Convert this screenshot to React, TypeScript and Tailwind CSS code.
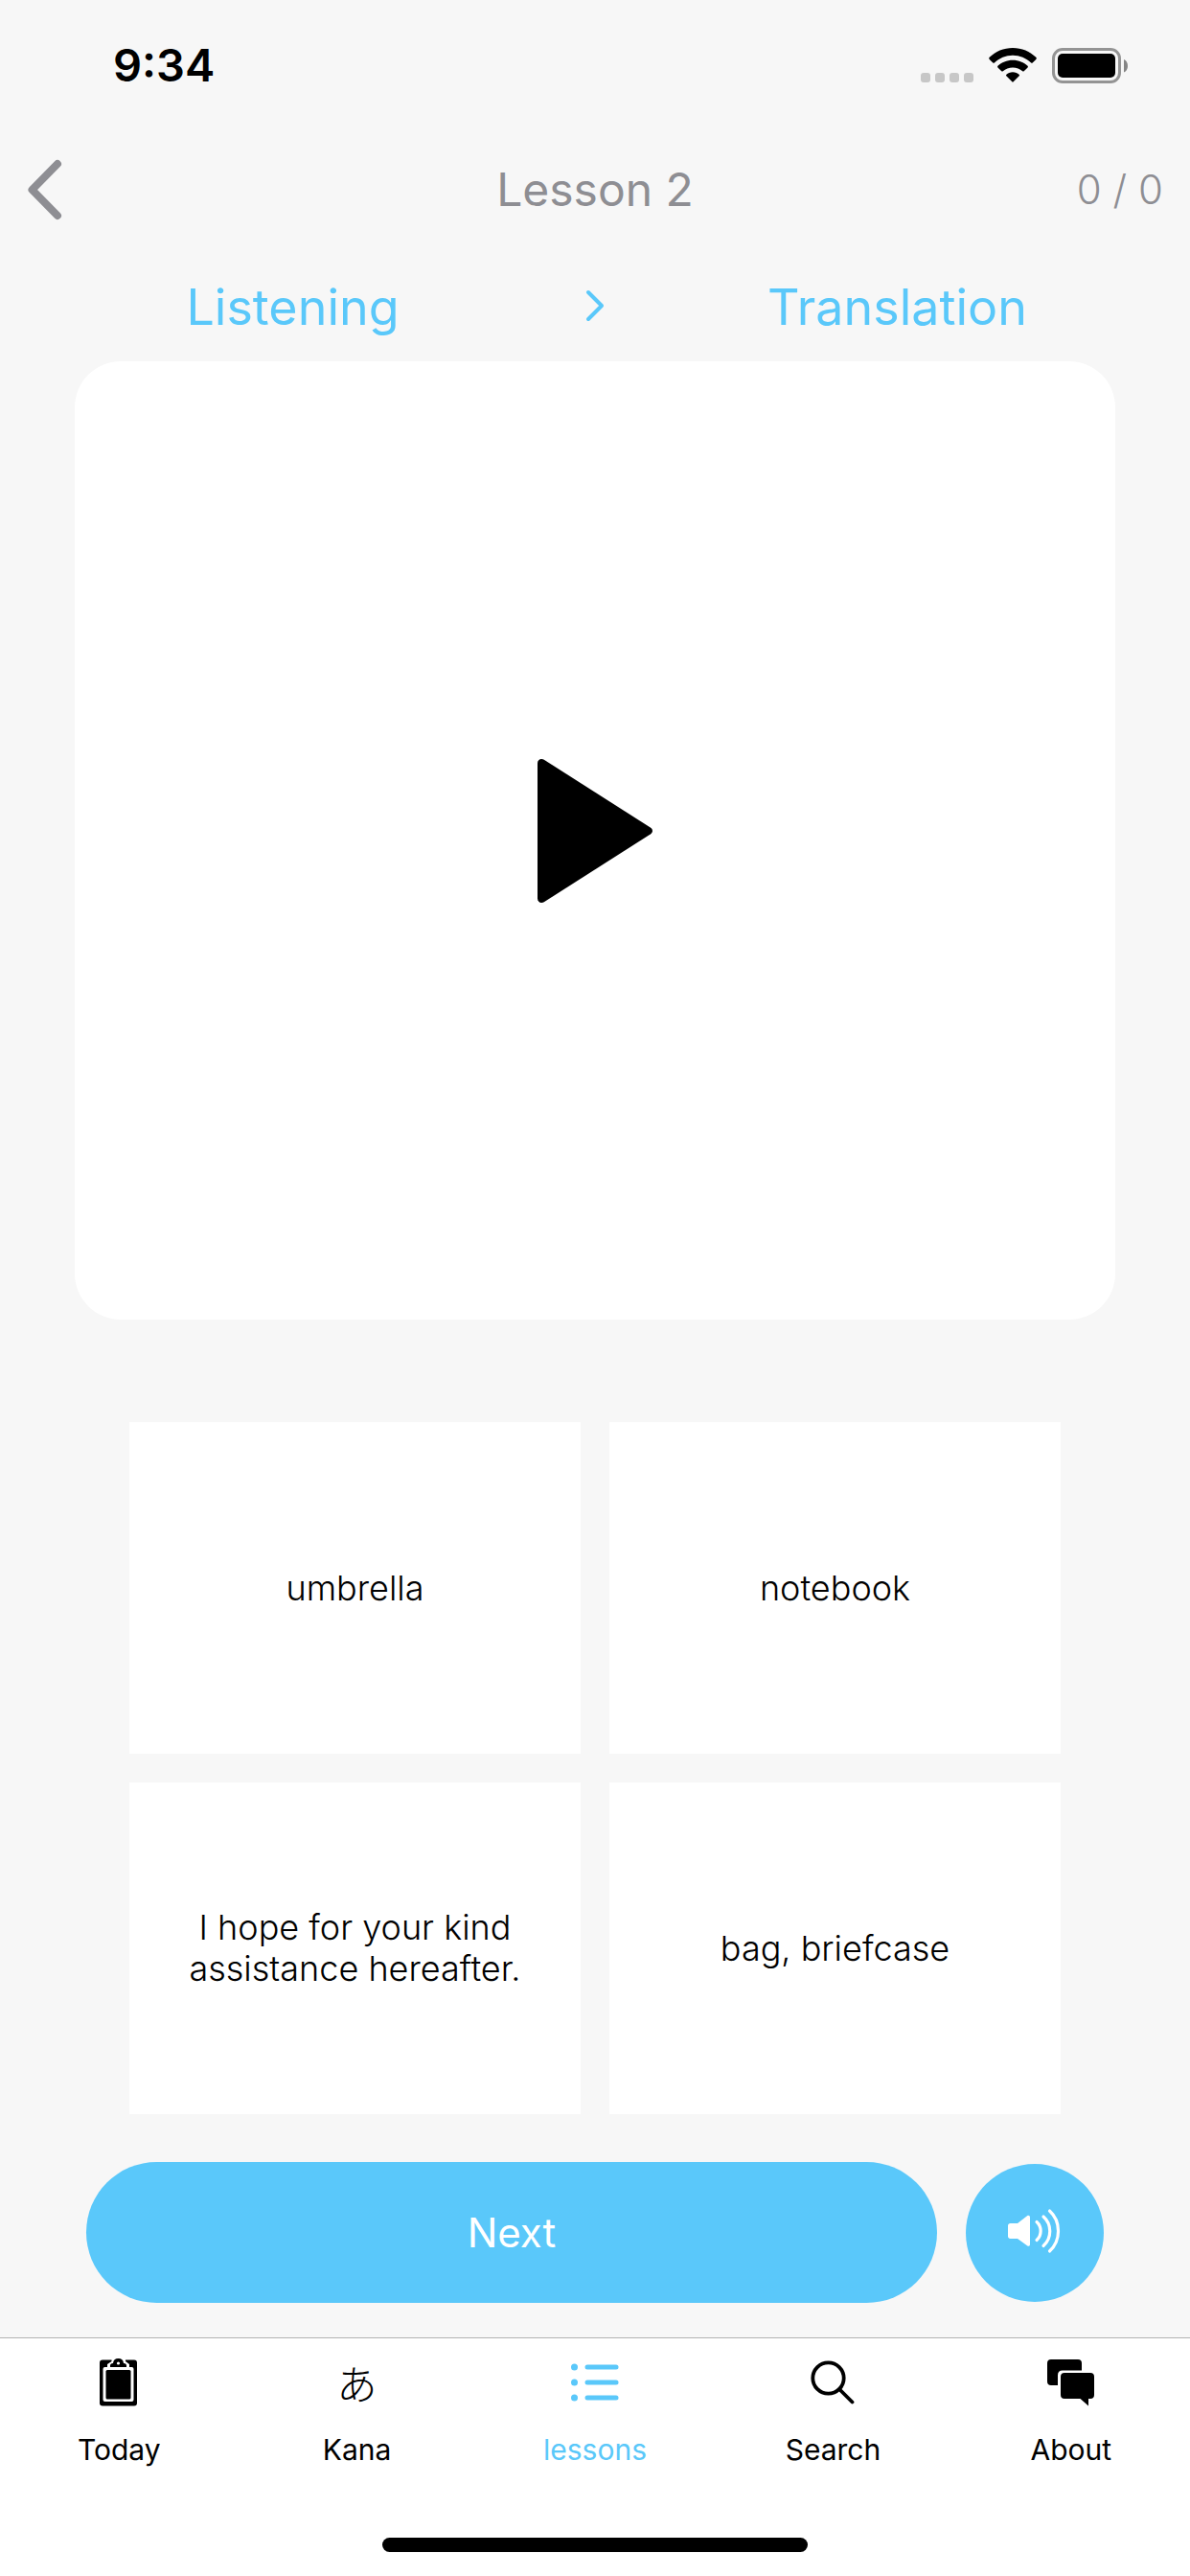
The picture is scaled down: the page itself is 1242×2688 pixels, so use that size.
import type { ReactNode } from "react";

const answers = [
  "umbrella",
  "notebook",
  "I hope for your kind assistance hereafter.",
  "bag, briefcase",
];

function StatusBar() {
  return (
    <div className="flex h-[132px] items-center justify-between pt-1 pr-16 pl-[118px]">
      <time className="text-[47px] leading-[60px] font-semibold">9:34</time>
      <div className="flex items-end">
        <div className="mb-px flex gap-[5px]">
          {[0, 1, 2, 3].map((dot) => (
            <span key={dot} className="size-2.5 rounded-[3px] bg-[#c7c7c7]" />
          ))}
        </div>
        <svg className="mb-px ml-4 h-9 w-[50px]" viewBox="0 0 50 36" aria-hidden="true">
          <path d="M25 0C34.500 0 43 3.700 49.300 9.800Q50.300 10.800 49.300 11.900L45.700 15.500Q44.900 16.200 44.100 15.500C39 10.700 32.400 7.800 25 7.800S11 10.700 5.900 15.500Q5.100 16.200 4.300 15.500L.7 11.900Q-.3 10.800.7 9.800C7 3.700 15.500 0 25 0Z" />
          <path d="M25 12.700C31.200 12.700 36.600 15 40.600 18.800Q41.300 19.600 40.600 20.400L36.700 24.300Q35.900 24.900 35.200 24.300C32.500 21.800 29 20.500 25 20.500S17.500 21.800 14.800 24.300Q14.100 24.900 13.300 24.300L9.400 20.400Q8.700 19.600 9.400 18.800C13.400 15 18.800 12.700 25 12.700Z" />
          <path d="M25 25.300C27.700 25.300 30 26.200 31.600 27.700Q32.400 28.500 31.700 29.200L25.700 35.300Q25 36 24.300 35.300L18.300 29.200Q17.600 28.500 18.400 27.700C20 26.200 22.300 25.300 25 25.300Z" />
        </svg>
        <svg className="ml-4 h-[37px] w-20" viewBox="0 0 80 37" aria-hidden="true">
          <rect x="1.500" y="1.500" width="69" height="34" rx="9.500" fill="none" stroke="#949494" strokeWidth="3" />
          <rect x="6" y="6" width="60" height="25" rx="5" />
          <path d="M75 12V25.500C77.500 24.500 79 21.800 79 18.700S77.500 13 75 12Z" fill="#858585" />
        </svg>
      </div>
    </div>
  );
}

function Tab({ label, active = false, children }: { label: string; active?: boolean; children: ReactNode }) {
  return (
    <a
      href="#"
      aria-current={active ? "page" : undefined}
      className={`flex flex-1 flex-col items-center pt-5 ${active ? "text-[#5ac8fa]" : "text-black"}`}
    >
      <span className="flex h-[52px] items-center justify-center">{children}</span>
      <span className="mt-6 text-[30px] leading-10">{label}</span>
    </a>
  );
}

export default function App() {
  return (
    <div className="flex min-h-screen flex-col bg-[#f7f7f7] font-['Inter','Noto_Sans_CJK_JP',sans-serif] text-black">
      <StatusBar />

      <header className="grid h-[132px] grid-cols-[1fr_auto_1fr] items-center px-7 text-[#8e8e93]">
        <button type="button" aria-label="Back" className="justify-self-start">
          <svg className="h-16 w-[38px]" viewBox="0 0 38 64" fill="none" stroke="currentColor" strokeWidth="8" strokeLinecap="round" strokeLinejoin="round">
            <path d="M32 5L5.500 32L32 59" />
          </svg>
        </button>
        <h1 className="text-5xl leading-[60px]">Lesson 2</h1>
        <span className="justify-self-end text-[42px] leading-[60px] font-light">0 / 0</span>
      </header>

      <div className="grid h-[113px] grid-cols-[1fr_auto_1fr] items-center justify-items-center text-[#5ac8fa]">
        <span className="text-[52px] leading-[60px]">Listening</span>
        <svg className="mb-1 h-[34px] w-5" viewBox="0 0 20 34" fill="none" stroke="currentColor" strokeWidth="4" strokeLinecap="round" strokeLinejoin="round" aria-hidden="true">
          <path d="M3 3L17 17L3 31" />
        </svg>
        <span className="text-[52px] leading-[60px]">Translation</span>
      </div>

      <main className="flex flex-1 flex-col">
        <button type="button" aria-label="Play" className="mx-[78px] flex min-h-96 flex-1 items-center justify-center rounded-[48px] bg-white pb-5">
          <svg className="h-[150px] w-[120px]" viewBox="0 0 120 150" aria-hidden="true">
            <path d="M0 4.500C0 .8 3.600-1.100 6.800.8L117.800 71.600C120.700 73.500 120.700 76.500 117.800 78.400L6.800 149.200C3.600 151.100 0 149.200 0 145.500Z" />
          </svg>
        </button>

        <div className="mx-[135px] mt-[107px] grid grid-cols-2 gap-[30px]">
          {answers.map((answer) => (
            <button key={answer} type="button" className="flex min-h-[346px] items-center justify-center bg-white px-12 text-4xl leading-[43px] font-light">
              {answer}
            </button>
          ))}
        </div>

        <div className="mx-[90px] mt-[50px] mb-9 flex items-center gap-[30px]">
          <button type="button" className="h-[147px] flex-1 rounded-full bg-[#5ac8fa] text-[42px] leading-[60px] text-white">
            Next
          </button>
          <button type="button" aria-label="Play sound" className="flex size-36 items-center justify-center rounded-full bg-[#5ac8fa] pb-1 text-white">
            <svg className="h-[50px] w-14" viewBox="0 0 56 50" fill="none" stroke="currentColor" strokeWidth="3.200" strokeLinecap="round">
              <path d="M2.500 17H10L20 9.300C21.500 8.200 23 9 23 10.800V39C23 40.800 21.500 41.400 20 40.300L10 33H2.500C1 33 0 32 0 30.500V19.500C0 18 1 17 2.500 17Z" fill="currentColor" stroke="none" />
              <path d="M30 15.500C35.500 20.500 35.500 29.500 30 34.500M37 10C46 18 46 32.500 37 40.500M43.500 4C55.500 15 55.500 35 43.500 46" />
            </svg>
          </button>
        </div>
      </main>

      <footer className="border-t border-[#b2b2b2] bg-white">
        <nav className="flex h-[208px]">
          <Tab label="Today">
            <svg className="h-[50px] w-10" viewBox="0 0 40 50" aria-hidden="true">
              <rect y="1.500" width="39" height="48" rx="3" fill="black" />
              <path d="M12.500 0H27V3L31 6V9H8V6L12.500 3Z" fill="white" />
              <rect x="3.500" y="9" width="32" height="36" rx="2" fill="white" />
              <rect x="6.500" y="12" width="26" height="30.500" rx="1.500" fill="black" />
              <path d="M11 9V7.500Q11 5 14 5Q14.500 0 19.500 0T25 5Q28 5 28 7.500V9Z" fill="black" />
              <circle cx="19.500" cy="5" r="1.600" fill="white" />
            </svg>
          </Tab>
          <Tab label="Kana">
            <span className="font-['Noto_Sans_CJK_JP',sans-serif] text-[42px] leading-[52px] font-light">あ</span>
          </Tab>
          <Tab label="lessons" active>
            <svg className="h-10 w-[50px]" viewBox="0 0 50 40" fill="currentColor" aria-hidden="true">
              {[4, 20, 36].map((y) => (
                <g key={y}>
                  <circle cx="3.500" cy={y} r="3.500" />
                  <rect x="14.500" y={y - 2.5} width="35" height="5" rx="2.500" />
                </g>
              ))}
            </svg>
          </Tab>
          <Tab label="Search">
            <svg className="size-[46px]" viewBox="0 0 46 46" fill="none" stroke="currentColor" strokeWidth="3.800" strokeLinecap="round" aria-hidden="true">
              <circle cx="18.500" cy="18.500" r="16.200" />
              <path d="M30 30L43.500 43.500" />
            </svg>
          </Tab>
          <Tab label="About">
            <svg className="size-[50px]" viewBox="0 0 50 50" aria-hidden="true">
              <path d="M4 1H32Q36 1 36 5V12.500H16Q11 12.500 11 17.500V28H4Q0 28 0 24V5Q0 1 4 1Z" />
              <path d="M18 15H45Q49 15 49 19V38Q49 42 45 42H43V49.500L34.500 42H18Q14 42 14 38V19Q14 15 18 15Z" />
            </svg>
          </Tab>
        </nav>
        <div className="mx-auto mb-[25px] h-[15px] w-[444px] rounded-full bg-black" />
      </footer>
    </div>
  );
}
